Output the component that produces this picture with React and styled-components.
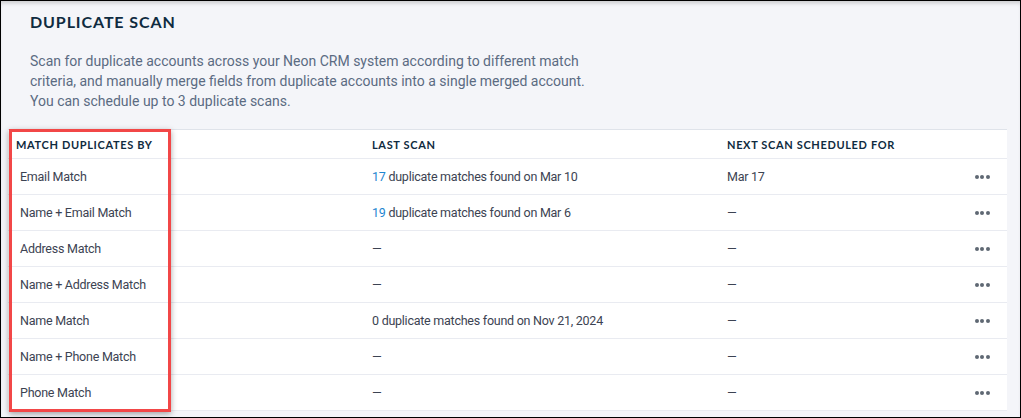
import React from "react";
import styled, { createGlobalStyle } from "styled-components";

const GlobalStyle = createGlobalStyle`
  body {
    margin: 0;
    background: #ffffff;
  }
`;

const Frame = styled.div`
  width: 1021px;
  height: 418px;
  box-sizing: border-box;
  border: 1px solid #000;
  background: #f4f5f9;
  box-shadow: inset 0 4px 4px -2px rgba(0, 0, 0, 0.18);
  overflow: hidden;
`;

const Head = styled.div`
  height: 128px;
  box-sizing: border-box;
  padding: 11px 0 0 29px;

  h1 {
    margin: 0;
    font-family: Lato, "Liberation Sans", sans-serif;
    font-weight: 700;
    font-size: 16px;
    letter-spacing: 0.9px;
    color: #0f2b40;
    line-height: 20px;
  }

  p {
    margin: 19px 0 0 0;
    width: 580px;
    font-family: Roboto, "Liberation Sans", sans-serif;
    font-size: 14px;
    line-height: 20px;
    color: #5b6b82;
  }
`;

const TableWrap = styled.div`
  position: relative;
  margin: 0 13px 0 7px;
  background: #fff;
  border-top: 1px solid #dfe3ea;
`;

const Row = styled.div`
  display: grid;
  grid-template-columns: 364px 355px 1fr 50px;
  align-items: center;
  height: ${(p) => (p.$head ? "28px" : "35px")};
  border-bottom: 1px solid #e9ebf1;
`;

const HeadCell = styled.div`
  padding-left: ${(p) => (p.$first ? "8px" : "0")};
  font-family: Lato, "Liberation Sans", sans-serif;
  font-weight: 700;
  font-size: 11px;
  letter-spacing: 0.65px;
  color: #0f2b40;
`;

const Cell = styled.div`
  padding-left: ${(p) => (p.$first ? "12px" : "0")};
  font-family: Roboto, "Liberation Sans", sans-serif;
  font-size: 12.5px;
  letter-spacing: -0.25px;
  color: #3c4352;
`;

const Count = styled.span`
  color: #1f87d1;
`;

const Dots = styled.div`
  display: flex;
  justify-content: center;
  gap: 1.5px;

  span {
    width: 4px;
    height: 4px;
    border-radius: 50%;
    background: #5f6873;
  }
`;

const Highlight = styled.div`
  position: absolute;
  left: 1px;
  top: -1px;
  width: 162px;
  height: 283px;
  box-sizing: border-box;
  border: 3px solid #f24747;
  box-shadow: 0 2px 6px rgba(0, 0, 0, 0.35);
  pointer-events: none;
`;

const rows = [
  { name: "Email Match", count: "17", last: "duplicate matches found on Mar 10", next: "Mar 17" },
  { name: "Name + Email Match", count: "19", last: "duplicate matches found on Mar 6", next: "—" },
  { name: "Address Match", last: "—", next: "—" },
  { name: "Name + Address Match", last: "—", next: "—" },
  { name: "Name Match", last: "0 duplicate matches found on Nov 21, 2024", next: "—" },
  { name: "Name + Phone Match", last: "—", next: "—" },
  { name: "Phone Match", last: "—", next: "—" },
];

function App() {
  return (
    <>
      <GlobalStyle />
      <Frame>
        <Head>
          <h1>DUPLICATE SCAN</h1>
          <p>
            Scan for duplicate accounts across your Neon CRM system according to different match
            criteria, and manually merge fields from duplicate accounts into a single merged account.
            You can schedule up to 3 duplicate scans.
          </p>
        </Head>
        <TableWrap>
          <Row $head>
            <HeadCell $first>MATCH DUPLICATES BY</HeadCell>
            <HeadCell>LAST SCAN</HeadCell>
            <HeadCell>NEXT SCAN SCHEDULED FOR</HeadCell>
            <div />
          </Row>
          {rows.map((r) => (
            <Row key={r.name}>
              <Cell $first>{r.name}</Cell>
              <Cell>
                {r.count && <Count>{r.count} </Count>}
                {r.last}
              </Cell>
              <Cell>{r.next}</Cell>
              <Dots>
                <span />
                <span />
                <span />
              </Dots>
            </Row>
          ))}
          <Highlight />
        </TableWrap>
      </Frame>
    </>
  );
}

export default App;
